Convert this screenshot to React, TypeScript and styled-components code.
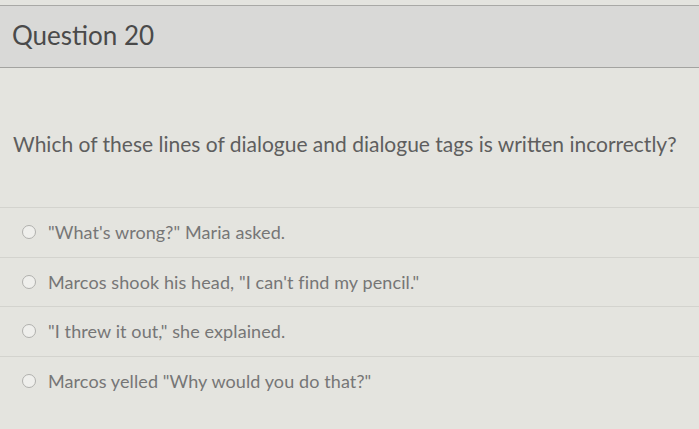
import React from "react";
import styled, { createGlobalStyle } from "styled-components";

const Global = createGlobalStyle`
  html, body { margin: 0; padding: 0; }
  body {
    background: #e4e4df;
    font-family: Lato, "Open Sans", sans-serif;
    width: 699px;
    height: 429px;
    overflow: hidden;
  }
`;

const Page = styled.div`
  padding-top: 5px;
  display: flex;
  flex-direction: column;
`;

const Header = styled.div`
  border-top: 1px solid #a9a9a6;
  border-bottom: 1px solid #a3a3a0;
  background: #d9d9d7;
  height: 63px;
  display: flex;
  align-items: center;
  padding: 0 12px;
  box-sizing: border-box;
`;

const Title = styled.h2`
  margin: 0 0 4px 0;
  font-size: 26px;
  font-weight: 400;
  color: #4a4a4a;
`;

const Body = styled.div`
  padding: 63px 0 0 13px;
  display: flex;
  flex-direction: column;
`;

const Prompt = styled.p`
  margin: 0 0 50px 0;
  font-size: 21px;
  color: #5e5e5e;
  line-height: 26px;
`;

const Options = styled.div`
  display: flex;
  flex-direction: column;
`;

const Option = styled.label`
  display: flex;
  align-items: center;
  gap: 12px;
  height: 49.5px;
  padding-left: 22px;
  border-top: 1px solid #d3d3ce;
  box-sizing: border-box;
`;

const Radio = styled.span`
  width: 12px;
  height: 12px;
  border-radius: 50%;
  border: 1.5px solid #b0b0ad;
  background: #efefec;
  flex: none;
`;

const OptionText = styled.span`
  font-size: 18px;
  color: #767676;
  letter-spacing: 0.1px;
`;

const options = [
  '"What\'s wrong?" Maria asked.',
  'Marcos shook his head, "I can\'t find my pencil."',
  '"I threw it out," she explained.',
  'Marcos yelled "Why would you do that?"',
];

export default function App() {
  return (
    <>
      <Global />
      <Page>
        <Header>
          <Title>Question 20</Title>
        </Header>
        <Body>
          <Prompt>
            Which of these lines of dialogue and dialogue tags is written incorrectly?
          </Prompt>
        </Body>
        <Options>
          {options.map((o) => (
            <Option key={o}>
              <Radio />
              <OptionText>{o}</OptionText>
            </Option>
          ))}
        </Options>
      </Page>
    </>
  );
}
